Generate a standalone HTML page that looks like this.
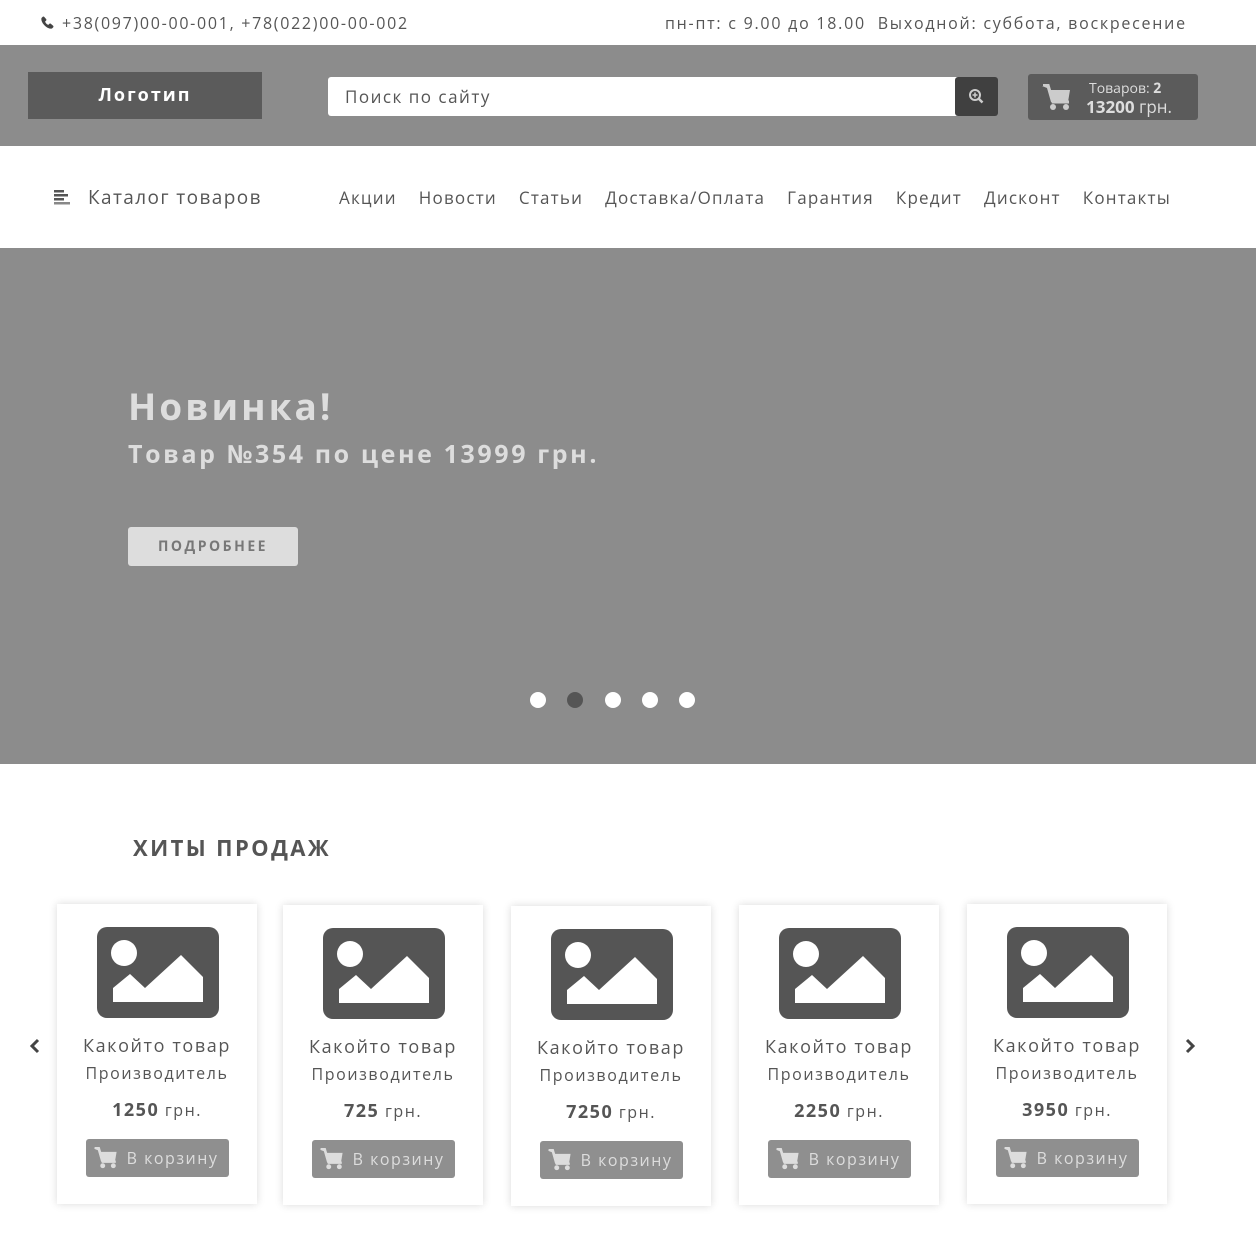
<!DOCTYPE html>
<html><head><meta charset="utf-8"><style>
*{margin:0;padding:0;box-sizing:border-box}
body{width:1256px;height:1251px;background:#fff;font-family:"Open Sans","Liberation Sans","DejaVu Sans",sans-serif;color:#555;position:relative;overflow:hidden}
.a{position:absolute}
.top{font-size:16px;color:#555;top:12px}
.card{position:absolute;width:200px;height:300px;background:#fff;box-shadow:0 0 8px rgba(0,0,0,.15);text-align:center}
.card svg.img{position:absolute;left:40px;top:23px}
.card .t{position:absolute;top:130px;left:0;width:200px;font-size:18px;letter-spacing:1.6px;color:#555}
.card .m{position:absolute;top:158px;left:0;width:200px;font-size:16px;letter-spacing:1.6px;color:#555}
.card .p{position:absolute;top:194px;left:0;width:200px;font-size:16px;letter-spacing:1.5px;color:#555}
.card .p b{font-size:18px}
.card .btn{position:absolute;left:29px;top:235px;width:143px;height:38px;background:#8f8f8f;border-radius:3px;color:#ddd;font-size:16px;letter-spacing:1.5px;line-height:38px;padding-left:30px}
.card .btn svg{position:absolute;left:7px;top:8px}
</style></head><body>
<svg class="a" style="left:40px;top:15px" width="15" height="15" viewBox="0 0 16 16"><path d="M14 11.5l-2.5-2.2c-.5-.4-1.2-.3-1.6.1l-1 1.1C7.2 9.8 6 8.6 5.4 7l1.1-1c.4-.4.5-1.1.1-1.6L4.5 2C4 1.5 3.3 1.5 2.8 2L1.6 3.2C.2 8 8 15.8 12.8 14.4l1.2-1.2c.5-.5.5-1.2 0-1.7z" fill="#444"/></svg>
<div class="a top" style="left:62px;letter-spacing:1.7px">+38(097)00-00-001, +78(022)00-00-002</div>
<div class="a top" style="left:665px;letter-spacing:1.75px">пн-пт: с 9.00 до 18.00 &nbsp;Выходной: суббота, воскресение</div>
<div class="a" style="left:0;top:45px;width:1256px;height:101px;background:#8c8c8c"></div>
<div class="a" style="left:28px;top:72px;width:234px;height:47px;background:#5b5b5b;color:#fff;font-weight:bold;font-size:18px;letter-spacing:2px;text-align:center;line-height:46px">Логотип</div>
<div class="a" style="left:328px;top:77px;width:640px;height:39px;background:#fff;border-radius:3px;font-size:17px;letter-spacing:1.5px;color:#555;line-height:39px;padding-left:17px">Поиск по сайту</div>
<div class="a" style="left:955px;top:77px;width:43px;height:39px;background:#404040;border-radius:3px"></div>
<svg class="a" style="left:967px;top:87px" width="18" height="18" viewBox="0 0 18 18"><circle cx="8" cy="8" r="5" fill="none" stroke="#ccc" stroke-width="2"/><path d="M11.5 11.5L15.5 15.5" stroke="#ccc" stroke-width="2.5"/><path d="M8 5.5v5M5.5 8h5" stroke="#ccc" stroke-width="1.6"/></svg>
<div class="a" style="left:1028px;top:74px;width:170px;height:46px;background:#5b5b5b;border-radius:3px"></div>
<svg class="a" style="left:1042px;top:84px" width="30" height="27" viewBox="0 0 30 27"><path d="M0 2h5l2 4h21l-2 12H9L5 4" fill="#ccc"/><path d="M1 1h5l5 17h16" stroke="#ccc" stroke-width="3" fill="none"/><circle cx="11" cy="23" r="3" fill="#ccc"/><circle cx="24" cy="23" r="3" fill="#ccc"/></svg>
<div class="a" style="left:1089px;top:79px;font-size:14px;color:#ddd">Товаров: <b>2</b></div>
<div class="a" style="left:1086px;top:95px;font-size:17px;color:#ddd"><b>13200</b> грн.</div>
<svg class="a" style="left:54px;top:190px" width="16" height="15" viewBox="0 0 16 15"><rect y="0" width="10" height="2.5" fill="#555"/><rect y="4" width="14" height="2.5" fill="#555"/><rect y="8" width="10" height="2.5" fill="#555"/><rect y="12" width="16" height="2.5" fill="#888"/></svg>
<div class="a" style="left:88px;top:184px;font-size:19px;letter-spacing:1.4px;color:#555">Каталог товаров</div>
<div class="a" style="left:339px;top:186px;font-size:17px;letter-spacing:1.2px;color:#555">
<span>Акции</span><span style="margin-left:22px">Новости</span><span style="margin-left:22px">Статьи</span><span style="margin-left:22px">Доставка/Оплата</span><span style="margin-left:22px">Гарантия</span><span style="margin-left:22px">Кредит</span><span style="margin-left:22px">Дисконт</span><span style="margin-left:22px">Контакты</span></div>
<div class="a" style="left:0;top:248px;width:1256px;height:516px;background:#8c8c8c"></div>
<div class="a" style="left:128px;top:380px;font-size:37px;font-weight:bold;letter-spacing:3px;color:#ddd">Новинка!</div>
<div class="a" style="left:128px;top:437px;font-size:25px;font-weight:bold;letter-spacing:2.6px;color:#ddd">Товар №354 по цене 13999 грн.</div>
<div class="a" style="left:128px;top:527px;width:170px;height:39px;background:#ddd;border-radius:3px;color:#777;font-weight:bold;font-size:14px;letter-spacing:2.5px;text-align:center;line-height:39px">ПОДРОБНЕЕ</div>
<div class="a" style="left:530px;top:692px;width:16px;height:16px;border-radius:50%;background:#fff"></div>
<div class="a" style="left:567px;top:692px;width:16px;height:16px;border-radius:50%;background:#555"></div>
<div class="a" style="left:605px;top:692px;width:16px;height:16px;border-radius:50%;background:#fff"></div>
<div class="a" style="left:642px;top:692px;width:16px;height:16px;border-radius:50%;background:#fff"></div>
<div class="a" style="left:679px;top:692px;width:16px;height:16px;border-radius:50%;background:#fff"></div>
<div class="a" style="left:133px;top:833px;font-size:22px;font-weight:bold;letter-spacing:2.4px;color:#555">ХИТЫ ПРОДАЖ</div>
<svg class="a" style="left:29px;top:1038px" width="12" height="16" viewBox="0 0 12 16"><path d="M9 2L3 8l6 6" stroke="#444" stroke-width="3" fill="none"/></svg>
<svg class="a" style="left:1184px;top:1038px" width="12" height="16" viewBox="0 0 12 16"><path d="M3 2l6 6-6 6" stroke="#444" stroke-width="3" fill="none"/></svg>

<div class="card" style="left:57px;top:904px"><svg class="img" width="122" height="91" viewBox="0 0 122 91"><rect width="122" height="91" rx="10" fill="#555"/><circle cx="27" cy="26" r="13" fill="#fff"/><polygon points="16,75 16,61 33,47 48,61 84,28 106,50 106,75" fill="#fff"/></svg><div class="t">Какойто товар</div><div class="m">Производитель</div><div class="p"><b>1250</b> грн.</div><div class="btn"><svg width="26" height="22" viewBox="0 0 30 27"><path d="M0 2h5l2 4h21l-2 12H9L5 4" fill="#ddd"/><path d="M1 1h5l5 17h16" stroke="#ddd" stroke-width="3" fill="none"/><circle cx="11" cy="23" r="3" fill="#ddd"/><circle cx="24" cy="23" r="3" fill="#ddd"/></svg>В корзину</div></div>
<div class="card" style="left:283px;top:905px"><svg class="img" width="122" height="91" viewBox="0 0 122 91"><rect width="122" height="91" rx="10" fill="#555"/><circle cx="27" cy="26" r="13" fill="#fff"/><polygon points="16,75 16,61 33,47 48,61 84,28 106,50 106,75" fill="#fff"/></svg><div class="t">Какойто товар</div><div class="m">Производитель</div><div class="p"><b>725</b> грн.</div><div class="btn"><svg width="26" height="22" viewBox="0 0 30 27"><path d="M0 2h5l2 4h21l-2 12H9L5 4" fill="#ddd"/><path d="M1 1h5l5 17h16" stroke="#ddd" stroke-width="3" fill="none"/><circle cx="11" cy="23" r="3" fill="#ddd"/><circle cx="24" cy="23" r="3" fill="#ddd"/></svg>В корзину</div></div>
<div class="card" style="left:511px;top:906px"><svg class="img" width="122" height="91" viewBox="0 0 122 91"><rect width="122" height="91" rx="10" fill="#555"/><circle cx="27" cy="26" r="13" fill="#fff"/><polygon points="16,75 16,61 33,47 48,61 84,28 106,50 106,75" fill="#fff"/></svg><div class="t">Какойто товар</div><div class="m">Производитель</div><div class="p"><b>7250</b> грн.</div><div class="btn"><svg width="26" height="22" viewBox="0 0 30 27"><path d="M0 2h5l2 4h21l-2 12H9L5 4" fill="#ddd"/><path d="M1 1h5l5 17h16" stroke="#ddd" stroke-width="3" fill="none"/><circle cx="11" cy="23" r="3" fill="#ddd"/><circle cx="24" cy="23" r="3" fill="#ddd"/></svg>В корзину</div></div>
<div class="card" style="left:739px;top:905px"><svg class="img" width="122" height="91" viewBox="0 0 122 91"><rect width="122" height="91" rx="10" fill="#555"/><circle cx="27" cy="26" r="13" fill="#fff"/><polygon points="16,75 16,61 33,47 48,61 84,28 106,50 106,75" fill="#fff"/></svg><div class="t">Какойто товар</div><div class="m">Производитель</div><div class="p"><b>2250</b> грн.</div><div class="btn"><svg width="26" height="22" viewBox="0 0 30 27"><path d="M0 2h5l2 4h21l-2 12H9L5 4" fill="#ddd"/><path d="M1 1h5l5 17h16" stroke="#ddd" stroke-width="3" fill="none"/><circle cx="11" cy="23" r="3" fill="#ddd"/><circle cx="24" cy="23" r="3" fill="#ddd"/></svg>В корзину</div></div>
<div class="card" style="left:967px;top:904px"><svg class="img" width="122" height="91" viewBox="0 0 122 91"><rect width="122" height="91" rx="10" fill="#555"/><circle cx="27" cy="26" r="13" fill="#fff"/><polygon points="16,75 16,61 33,47 48,61 84,28 106,50 106,75" fill="#fff"/></svg><div class="t">Какойто товар</div><div class="m">Производитель</div><div class="p"><b>3950</b> грн.</div><div class="btn"><svg width="26" height="22" viewBox="0 0 30 27"><path d="M0 2h5l2 4h21l-2 12H9L5 4" fill="#ddd"/><path d="M1 1h5l5 17h16" stroke="#ddd" stroke-width="3" fill="none"/><circle cx="11" cy="23" r="3" fill="#ddd"/><circle cx="24" cy="23" r="3" fill="#ddd"/></svg>В корзину</div></div>
</body></html>
